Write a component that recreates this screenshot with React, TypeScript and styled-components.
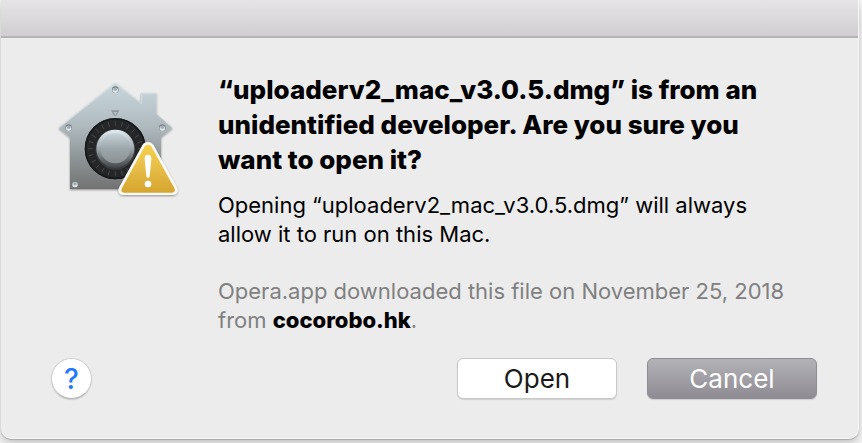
import React from "react";
import styled, { createGlobalStyle } from "styled-components";

const GlobalStyle = createGlobalStyle`
  * { box-sizing: border-box; }
  body {
    margin: 0;
    background: #f8f8f8;
    font-family: Inter, "Liberation Sans", sans-serif;
    overflow: hidden;
  }
`;

const Desktop = styled.div`
  padding: 0 3px 4px 1px;
`;

const Dialog = styled.main`
  background: #ececec;
  border-right: 1px solid #f8f8f8;
  border-bottom: 1px solid #f8f8f8;
  border-radius: 0 0 10px 10px;
  box-shadow: 0 1px 1px #a8a8a8, 0 5px 12px rgba(0, 0, 0, 0.22);
  overflow: hidden;
`;

const TitleBar = styled.header`
  height: 38px;
  background: linear-gradient(#e6e4e7, #d0ced1);
  border-bottom: 2px solid #b5b3b6;
`;

const Content = styled.section`
  display: grid;
  grid-template-columns: 145px minmax(0, 592px);
  column-gap: 28px;
  padding: 32px 40px 0 44px;
`;

const Icon = styled.svg`
  width: 145px;
  height: 135px;
`;

const Message = styled.div`
  padding-top: 2px;
`;

const Heading = styled.h1`
  margin: 0;
  padding-right: 40px;
  color: #000;
  font-size: 26px;
  line-height: 35px;
  font-weight: 800;
`;

const Text = styled.p<{ $muted?: boolean }>`
  margin: ${(p) => (p.$muted ? 28 : 14)}px 0 0;
  padding-right: ${(p) => (p.$muted ? 0 : 20)}px;
  color: ${(p) => (p.$muted ? "#808080" : "#000")};
  font-size: 22px;
  line-height: 29px;
`;

const Source = styled.strong`
  color: #000;
  font-weight: 800;
`;

const Footer = styled.footer`
  display: flex;
  align-items: center;
  gap: 30px;
  padding: 23px 41px 39px 50px;
`;

const HelpButton = styled.button`
  width: 41px;
  height: 41px;
  margin-right: auto;
  padding: 0;
  border: 1px solid #cfcfcf;
  border-bottom-color: #b8b8b8;
  border-radius: 50%;
  background: #fff;
  box-shadow: 0 1px 1px rgba(0, 0, 0, 0.15);
  color: #1f78ff;
  font: 500 28px/38px Inter, sans-serif;
`;

const ActionButton = styled.button<{ $primary?: boolean }>`
  width: ${(p) => (p.$primary ? 170 : 160)}px;
  height: 41px;
  padding: 0;
  border: 1px solid ${(p) => (p.$primary ? "#8f8d93" : "#c8c8c8")};
  border-radius: 6px;
  background: ${(p) => (p.$primary ? "linear-gradient(#b3b2b7, #8e8c92)" : "#fff")};
  box-shadow: 0 1px 1px rgba(0, 0, 0, 0.12);
  color: ${(p) => (p.$primary ? "#fff" : "#1a1a1a")};
  font: 400 26px/38px Inter, sans-serif;
`;

const screws = [
  [211, 59],
  [71, 173],
  [352, 173],
  [90, 342],
];

function GatekeeperIcon() {
  const ticks = Array.from({ length: 24 }, (_, i) => i * 15);
  return (
    <Icon viewBox="0 0 435 405" role="img" aria-label="Security warning">
      <defs>
        <linearGradient id="house" x1="0" y1="0" x2="0" y2="1">
          <stop offset="0" stopColor="#c9d8de" />
          <stop offset=".4" stopColor="#b0bbc0" />
          <stop offset=".7" stopColor="#8f9698" />
          <stop offset="1" stopColor="#727272" />
        </linearGradient>
        <linearGradient id="rim" x1="0" y1="0" x2="0" y2="1">
          <stop offset="0" stopColor="#e2edf1" />
          <stop offset=".45" stopColor="#a5afb3" />
          <stop offset=".8" stopColor="#62686a" />
          <stop offset="1" stopColor="#46494b" />
        </linearGradient>
        <linearGradient id="knob" x1="0" y1="0" x2="0" y2="1">
          <stop offset="0" stopColor="#c6d3d8" />
          <stop offset=".5" stopColor="#9ca7ab" />
          <stop offset="1" stopColor="#8b9295" />
        </linearGradient>
        <linearGradient id="gold" x1="0" y1="0" x2="0" y2="1">
          <stop offset="0" stopColor="#f5d14b" />
          <stop offset=".5" stopColor="#e6bd47" />
          <stop offset="1" stopColor="#d5a52f" />
        </linearGradient>
        <filter id="shade" x="-10%" y="-10%" width="120%" height="125%">
          <feDropShadow dx="0" dy="3" stdDeviation="3" floodOpacity=".4" />
        </filter>
      </defs>
      <g filter="url(#shade)">
        <path d="M211 38 288 98V69H334V132L382 174 348 202V357H75V202L41 174Z" fill="url(#house)" />
        <path d="M43 173 211 40 290 101V71H332" fill="none" stroke="#dce6ea" strokeWidth="2" />
      </g>
      {screws.map(([x, y]) => (
        <g key={`${x}-${y}`}>
          <circle cx={x} cy={y} r="10" fill="#7c8589" />
          <circle cx={x} cy={y + 2} r="8" fill="#dce4e7" />
          <circle cx={x} cy={y - 1} r="5" fill="#a2acb0" />
        </g>
      ))}
      <path d="M198 121H223L214 137H207Z" fill="#8c979c" />
      <path d="M205 126H217L211 136Z" fill="#b3bec3" />
      <circle cx="211" cy="236" r="92" fill="#242627" />
      <circle cx="211" cy="236" r="89" fill="none" stroke="#17191a" strokeWidth="5" />
      {ticks.map((angle) => (
        <path key={angle} d="M211 154V168" stroke="#555a5c" strokeWidth="2" transform={`rotate(${angle} 211 236)`} />
      ))}
      <circle cx="211" cy="239" r="60" fill="#393c3e" />
      <circle cx="211" cy="236" r="57" fill="url(#rim)" />
      <circle cx="211" cy="235" r="45" fill="url(#knob)" />
      <g filter="url(#shade)">
        <path d="M309 216C317 216 322 220 326 226L395 351C402 365 395 375 381 375H236C222 375 217 364 223 351L292 226C296 219 301 216 309 216Z" fill="#f9f9f6" />
      </g>
      <path d="M309 224C314 224 317 226 320 231L388 354C392 363 388 368 380 368H238C230 368 227 363 231 354L298 231C301 226 304 224 309 224Z" fill="url(#gold)" />
      <path d="M309 254C316 254 320 259 319 267L314 318C313 325 305 325 304 318L299 267C298 259 302 254 309 254Z" fill="#fff" />
      <circle cx="309" cy="342" r="10" fill="#fff" />
    </Icon>
  );
}

export default function App() {
  return (
    <>
      <GlobalStyle />
      <Desktop>
        <Dialog>
          <TitleBar />
          <Content>
            <GatekeeperIcon />
            <Message>
              <Heading>
                “uploaderv2_mac_v3.0.5.dmg” is from an unidentified developer. Are you sure you want to open it?
              </Heading>
              <Text>Opening “uploaderv2_mac_v3.0.5.dmg” will always allow it to run on this Mac.</Text>
              <Text $muted>
                Opera.app downloaded this file on November 25, 2018 from <Source>cocorobo.hk</Source>.
              </Text>
            </Message>
          </Content>
          <Footer>
            <HelpButton type="button" aria-label="Help">?</HelpButton>
            <ActionButton type="button">Open</ActionButton>
            <ActionButton type="button" $primary>Cancel</ActionButton>
          </Footer>
        </Dialog>
      </Desktop>
    </>
  );
}
